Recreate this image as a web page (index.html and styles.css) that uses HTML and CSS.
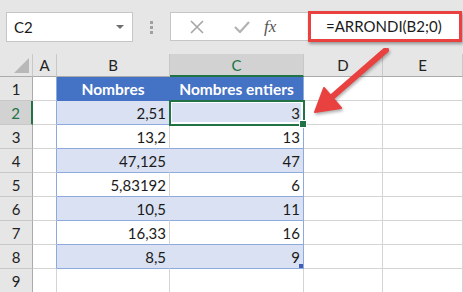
FILE: index.html
```html
<!DOCTYPE html>
<html lang="fr">
<head>
    <meta charset="UTF-8">
    <title>ARRONDI</title>
    <link rel="stylesheet" href="styles.css">
</head>
<body>
    <!-- Formula bar -->
    <div class="toolbar">
        <div class="name-box">
            <span>C2</span>
            <span class="caret"></span>
        </div>
        <div class="grip"><i></i><i></i><i></i></div>
        <div class="formula-bar">
            <div class="fx-tools">
                <svg width="14" height="14" viewBox="0 0 14 14"><path d="M1 1 L13 13 M13 1 L1 13" stroke="#a6a6a6" stroke-width="1.6" fill="none"/></svg>
                <svg width="16" height="12" viewBox="0 0 16 12"><path d="M1 6 L6 11 L15 1" stroke="#b3b3b3" stroke-width="2.2" fill="none"/></svg>
                <span class="fx">fx</span>
            </div>
            <div class="formula">=ARRONDI(B2;0)</div>
        </div>
    </div>

    <!-- Sheet -->
    <div class="sheet">
        <div class="grid">
            <div class="hd corner"><span class="tri"></span></div>
            <div class="hd col">A</div>
            <div class="hd col">B</div>
            <div class="hd col active">C</div>
            <div class="hd col">D</div>
            <div class="hd col">E</div>

            <div class="hd row">1</div>
            <div class="cell edge"></div>
            <div class="cell th">Nombres</div>
            <div class="cell th last">Nombres entiers</div>
            <div class="cell"></div>
            <div class="cell"></div>

            <div class="hd row active">2</div>
            <div class="cell edge"></div>
            <div class="cell tb band">2,51</div>
            <div class="cell tb band last selected">3<span class="handle"></span></div>
            <div class="cell"></div>
            <div class="cell"></div>

            <div class="hd row">3</div>
            <div class="cell edge"></div>
            <div class="cell tb">13,2</div>
            <div class="cell tb last">13</div>
            <div class="cell"></div>
            <div class="cell"></div>

            <div class="hd row">4</div>
            <div class="cell edge"></div>
            <div class="cell tb band">47,125</div>
            <div class="cell tb band last">47</div>
            <div class="cell"></div>
            <div class="cell"></div>

            <div class="hd row">5</div>
            <div class="cell edge"></div>
            <div class="cell tb">5,83192</div>
            <div class="cell tb last">6</div>
            <div class="cell"></div>
            <div class="cell"></div>

            <div class="hd row">6</div>
            <div class="cell edge"></div>
            <div class="cell tb band">10,5</div>
            <div class="cell tb band last">11</div>
            <div class="cell"></div>
            <div class="cell"></div>

            <div class="hd row">7</div>
            <div class="cell edge"></div>
            <div class="cell tb">16,33</div>
            <div class="cell tb last">16</div>
            <div class="cell"></div>
            <div class="cell"></div>

            <div class="hd row">8</div>
            <div class="cell edge"></div>
            <div class="cell tb band">8,5</div>
            <div class="cell tb band last">9<span class="resize"></span></div>
            <div class="cell"></div>
            <div class="cell"></div>

            <div class="hd row">9</div>
            <div class="cell"></div>
            <div class="cell"></div>
            <div class="cell"></div>
            <div class="cell"></div>
            <div class="cell"></div>
        </div>

        <!-- Red arrow pointing at C2 -->
        <svg class="arrow" width="100" height="80" viewBox="0 0 100 80">
            <g fill="#e8413f" stroke="#e8413f" stroke-linejoin="round" stroke-linecap="round">
                <path d="M84 2 L30 49" stroke-width="6" fill="none"/>
                <path d="M13 64 L22 40 L39 60 Z" stroke-width="2"/>
            </g>
        </svg>
    </div>
</body>
</html>
```

FILE: styles.css
```css
body {
    margin: 0;
    width: 463px;
    height: 292px;
    overflow: hidden;
    background-color: #ffffff;
    font-family: Lato, "Open Sans", sans-serif;
    color: #1a1a1a;
}
.toolbar {
    height: 54px;
    box-sizing: border-box;
    padding: 12px 0 0 6px;
    background-color: #e6e6e6;
    display: flex;
    align-items: flex-start;
}
.name-box {
    width: 127px;
    height: 30px;
    box-sizing: border-box;
    border: 1px solid #c6c6c6;
    background-color: #ffffff;
    display: flex;
    align-items: center;
    justify-content: space-between;
    padding: 0 8px 0 7px;
    font-size: 15px;
}
.caret {
    width: 0;
    height: 0;
    border-left: 4px solid transparent;
    border-right: 4px solid transparent;
    border-top: 4px solid #6e6e6e;
}
.grip {
    width: 37px;
    height: 30px;
    display: flex;
    flex-direction: column;
    align-items: center;
    justify-content: center;
    gap: 2px;
}
.grip i {
    width: 3px;
    height: 3px;
    background-color: #a0a0a0;
}
.formula-bar {
    flex: 1;
    display: flex;
    align-items: flex-start;
}
.fx-tools {
    width: 138px;
    height: 29px;
    box-sizing: border-box;
    border: 1px solid #c6c6c6;
    border-right: none;
    background-color: #ffffff;
    display: flex;
    align-items: center;
    padding-left: 19px;
    gap: 30px;
}
.fx {
    font-family: "Liberation Serif", serif;
    font-style: italic;
    font-size: 17px;
    color: #555555;
    margin-left: -16px;
}
.formula {
    width: 154px;
    height: 31px;
    box-sizing: border-box;
    margin-top: -1px;
    border: 3px solid #e8413f;
    background-color: #ffffff;
    box-shadow: 1px 2px 3px rgba(0, 0, 0, 0.35);
    font-size: 15px;
    line-height: 24px;
    padding-left: 15px;
}
.sheet {
    position: relative;
}
.grid {
    display: grid;
    grid-template-columns: 33px 24px 113px 134px 79px 80px;
    grid-template-rows: 23px repeat(9, 24px);
    font-size: 15px;
}
.hd {
    background-color: #e6e6e6;
    box-sizing: border-box;
    display: flex;
    align-items: center;
    justify-content: center;
    color: #222222;
}
.hd.col {
    border-right: 1px solid #c8c8c8;
    border-bottom: 1px solid #ababab;
}
.hd.row {
    border-right: 1px solid #ababab;
    border-bottom: 1px solid #c8c8c8;
}
.hd.corner {
    border-right: 1px solid #c8c8c8;
    border-bottom: 1px solid #ababab;
    position: relative;
}
.tri {
    position: absolute;
    right: 3px;
    bottom: 3px;
    width: 0;
    height: 0;
    border-left: 15px solid transparent;
    border-bottom: 15px solid #b8b8b8;
}
.hd.col.active {
    background-color: #d2d2d2;
    color: #217346;
    border-bottom: 2px solid #217346;
}
.hd.row.active {
    background-color: #d2d2d2;
    color: #217346;
    border-right: 2px solid #217346;
}
.cell {
    box-sizing: border-box;
    border-right: 1px solid #d4d4d4;
    border-bottom: 1px solid #d4d4d4;
    display: flex;
    align-items: center;
    justify-content: flex-end;
    padding-right: 3px;
    position: relative;
}
.cell.edge {
    border-right-color: #8ea9db;
}
.cell.th {
    background-color: #4472c4;
    color: #ffffff;
    font-weight: bold;
    font-size: 15.5px;
    justify-content: center;
    padding: 0;
    border-right-color: #4472c4;
    border-bottom-color: #4472c4;
}
.cell.tb {
    border-bottom-color: #8ea9db;
}
.cell.band {
    background-color: #d9e1f2;
    border-right-color: #d9e1f2;
}
.cell.last {
    border-right-color: #8ea9db;
}
.cell.selected {
    outline: 2px solid #217346;
    outline-offset: -1px;
    box-shadow: inset 0 0 0 2px #ffffff;
    z-index: 1;
}
.handle {
    position: absolute;
    right: -4px;
    bottom: -4px;
    width: 6px;
    height: 6px;
    background-color: #217346;
    border: 1px solid #ffffff;
}
.resize {
    position: absolute;
    right: 0;
    bottom: 0;
    width: 4px;
    height: 4px;
    background-color: #3f5fb5;
}
.arrow {
    position: absolute;
    left: 302px;
    top: -6px;
    z-index: 2;
    filter: drop-shadow(1px 2px 1.5px rgba(0, 0, 0, 0.3));
}
```
